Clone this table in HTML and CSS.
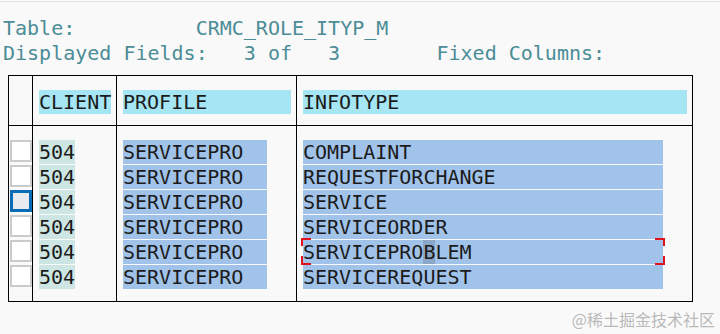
FILE: index.html
```html
<!DOCTYPE html>
<html>
<head>
<meta charset="utf-8">
<link rel="stylesheet" href="styles.css">
</head>
<body>
<div class="page">
  <div class="topline"></div>
  <div class="info">
    <div class="line">Table:          CRMC_ROLE_ITYP_M</div>
    <div class="line">Displayed Fields:   3 of   3        Fixed Columns:</div>
  </div>
  <div class="grid">
    <div class="cell head c0"></div>
    <div class="cell head c1"><span class="hbox w6">CLIENT</span></div>
    <div class="cell head c2"><span class="hbox w14">PROFILE</span></div>
    <div class="cell head c3"><span class="hbox w32">INFOTYPE</span></div>

    <div class="cell body c0">
      <div class="chk"></div>
      <div class="chk"></div>
      <div class="chk active"></div>
      <div class="chk"></div>
      <div class="chk"></div>
      <div class="chk"></div>
    </div>
    <div class="cell body c1">
      <div class="val client">504</div>
      <div class="val client">504</div>
      <div class="val client">504</div>
      <div class="val client">504</div>
      <div class="val client">504</div>
      <div class="val client">504</div>
    </div>
    <div class="cell body c2">
      <div class="val sel w12">SERVICEPRO</div>
      <div class="val sel w12">SERVICEPRO</div>
      <div class="val sel w12">SERVICEPRO</div>
      <div class="val sel w12">SERVICEPRO</div>
      <div class="val sel w12">SERVICEPRO</div>
      <div class="val sel w12">SERVICEPRO</div>
    </div>
    <div class="cell body c3">
      <div class="val sel w30">COMPLAINT</div>
      <div class="val sel w30">REQUESTFORCHANGE</div>
      <div class="val sel w30">SERVICE</div>
      <div class="val sel w30">SERVICEORDER</div>
      <div class="val sel w30 focus">SERVICEPRO<span class="cursor">B</span>LEM<span class="br tl"></span><span class="br bl"></span><span class="br tr"></span><span class="br brr"></span></div>
      <div class="val sel w30">SERVICEREQUEST</div>
    </div>
  </div>
  <div class="mark">@稀土掘金技术社区</div>
</div>
</body>
</html>
```

FILE: styles.css
```css
html, body {
  margin: 0;
  padding: 0;
  background: #f9f9f9;
}

.page {
  position: relative;
  width: 720px;
  height: 334px;
  padding-top: 1px;
  box-sizing: border-box;
  font-family: "DejaVu Sans Mono", monospace;
  font-size: 20px;
  overflow: hidden;
}

.topline {
  height: 1px;
  background: #e3e3e3;
}

.info {
  margin-top: 14px;
  padding-left: 3px;
  color: #4b8c97;
  line-height: 25px;
}

.line {
  white-space: pre;
  height: 25px;
}

.grid {
  margin: 9px 0 0 8px;
  width: 685px;
  box-sizing: border-box;
  border: 1px solid #000;
  display: grid;
  grid-template-columns: 24px 84px 180px 395px;
  grid-template-rows: 50px 175px;
  color: #1b1b1b;
  line-height: 24px;
}

.cell {
  box-sizing: border-box;
  border-right: 1px solid #000;
}

.cell.c3 {
  border-right: none;
}

.cell.head {
  border-bottom: 1px solid #000;
  padding: 14px 0 0 6px;
}

.cell.body {
  padding: 14px 0 0 6px;
  display: flex;
  flex-direction: column;
}

.cell.c0 {
  padding-left: 1px;
}

.hbox {
  display: inline-block;
  height: 24px;
  background: #a6e5f3;
  white-space: pre;
}

.w6 { width: 72px; }
.w12 { width: 144px; }
.w14 { width: 168px; }
.w30 { width: 360px; }
.w32 { width: 384px; }

.val {
  height: 24px;
  margin-bottom: 1px;
  white-space: pre;
}

.val.client {
  width: 36px;
  background: #cde6e3;
}

.val.sel {
  background: #a2c3e9;
}

.chk {
  width: 22px;
  height: 22px;
  box-sizing: border-box;
  border: 2px solid #cbcbcb;
  background: #ffffff;
  margin-bottom: 3px;
}

.chk.active {
  border: 3px solid #0a6cb6;
  background: #e7ebef;
}

.focus {
  position: relative;
}

.cursor {
  background: #8ba7c6;
}

.br {
  position: absolute;
  width: 10px;
  height: 8px;
  box-sizing: border-box;
  border: 0 solid #e0101c;
}

.br.tl { left: -2px; top: -2px; border-top-width: 2px; border-left-width: 2px; }
.br.bl { left: -2px; bottom: -1px; height: 9px; border-bottom-width: 2px; border-left-width: 2px; }
.br.tr { right: -2px; top: -2px; border-top-width: 2px; border-right-width: 2px; }
.br.brr { right: -2px; bottom: -1px; height: 9px; border-bottom-width: 2px; border-right-width: 2px; }

.mark {
  position: absolute;
  right: 5px;
  top: 309px;
  font-family: "Noto Sans CJK SC", sans-serif;
  font-size: 16px;
  line-height: 20px;
  color: #b9b9b9;
}
```
